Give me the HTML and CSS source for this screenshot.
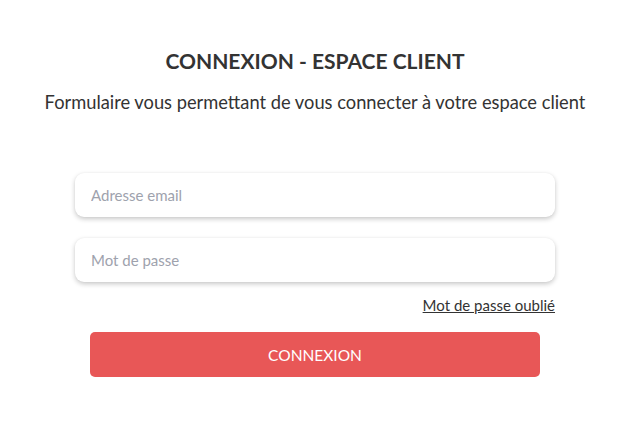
FILE: index.html
```html
<!DOCTYPE html>
<html lang="fr">
<head>
<meta charset="utf-8">
<title>Connexion - Espace client</title>
<link rel="stylesheet" href="styles.css">
</head>
<body>
<main class="page">
  <header class="intro">
    <h1 class="title">CONNEXION - ESPACE CLIENT</h1>
    <p class="subtitle">Formulaire vous permettant de vous connecter à votre espace client</p>
  </header>
  <form class="form">
    <input class="field" type="email" placeholder="Adresse email">
    <input class="field" type="password" placeholder="Mot de passe">
    <div class="forgot-row"><a class="forgot" href="#">Mot de passe oublié</a></div>
    <button class="submit" type="button">CONNEXION</button>
  </form>
</main>
</body>
</html>
```
FILE: styles.css
```css
* { box-sizing: border-box; }
html, body { margin: 0; padding: 0; background: #fff; }
body {
  font-family: "Lato", "Noto Sans", sans-serif;
  color: #333;
}
.page {
  display: flex;
  flex-direction: column;
  align-items: center;
  padding: 47px 0 0 0;
  width: 630px;
}
.intro { text-align: center; }
.title {
  margin: 0;
  font-size: 21px;
  font-weight: 700;
  line-height: 28px;
  color: #333;
}
.subtitle {
  margin: 15px 0 0 0;
  font-size: 18.3px;
  line-height: 24px;
  color: #333;
}
.form {
  width: 480px;
  margin-top: 59px;
  display: flex;
  flex-direction: column;
}
.field {
  height: 44px;
  border: none;
  border-radius: 9px;
  background: #fff;
  box-shadow: 0 2px 5px rgba(0,0,0,0.22), 0 0 2px rgba(0,0,0,0.04);
  padding: 0 16px;
  font-family: inherit;
  font-size: 15px;
  color: #333;
  outline: none;
}
.field + .field { margin-top: 21px; }
.field::placeholder { color: #9ea2ad; }
.forgot-row {
  display: flex;
  justify-content: flex-end;
  margin-top: 13px;
}
.forgot {
  font-size: 15px;
  line-height: 20px;
  color: #333;
  text-decoration: underline;
}
.submit {
  align-self: center;
  width: 450px;
  height: 45px;
  margin-top: 17px;
  border: none;
  border-radius: 5px;
  background: #e85757;
  color: #fff;
  font-family: inherit;
  font-size: 15.5px;
  cursor: pointer;
}
```
